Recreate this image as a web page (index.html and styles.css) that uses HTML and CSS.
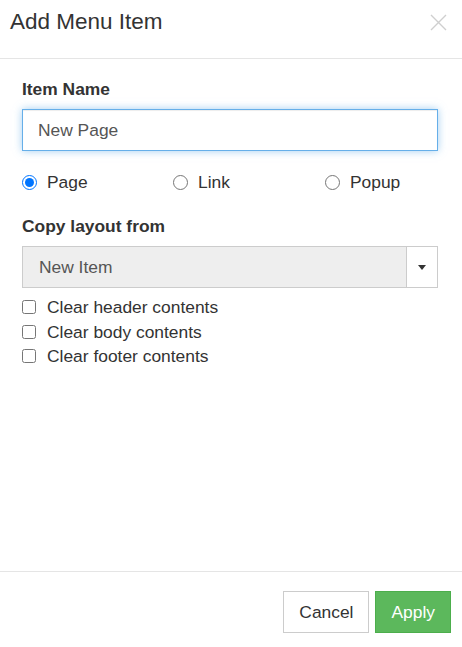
FILE: index.html
```html
<!DOCTYPE html>
<html lang="en">
<head>
<meta charset="utf-8">
<title>Add Menu Item</title>
<link rel="stylesheet" href="styles.css">
</head>
<body>
<div class="modal">
  <div class="modal-header">
    <h4 class="modal-title">Add Menu Item</h4>
    <svg class="close" width="17" height="17" viewBox="0 0 17 17" aria-label="Close">
      <path d="M1 1 L16 16 M16 1 L1 16" stroke="#cfcfcf" stroke-width="1.4" fill="none"/>
    </svg>
  </div>
  <div class="modal-body">
    <label class="field-label">Item Name</label>
    <input class="text-input" type="text" value="New Page">
    <div class="radio-row">
      <label class="radio"><input type="radio" name="kind" checked><span>Page</span></label>
      <label class="radio"><input type="radio" name="kind"><span>Link</span></label>
      <label class="radio"><input type="radio" name="kind"><span>Popup</span></label>
    </div>
    <label class="field-label label-copy">Copy layout from</label>
    <div class="select">
      <div class="select-value">New Item</div>
      <div class="select-btn"><span class="caret"></span></div>
    </div>
    <div class="checks">
      <label class="check"><input type="checkbox"><span>Clear header contents</span></label>
      <label class="check"><input type="checkbox"><span>Clear body contents</span></label>
      <label class="check"><input type="checkbox"><span>Clear footer contents</span></label>
    </div>
  </div>
  <div class="modal-footer">
    <button class="btn btn-default">Cancel</button>
    <button class="btn btn-success">Apply</button>
  </div>
</div>
</body>
</html>
```

FILE: styles.css
```css
* { box-sizing: border-box; }
html, body { margin: 0; padding: 0; background: #fff; }
body {
  font-family: "Liberation Sans", Arial, sans-serif;
  font-size: 17.4px;
  line-height: 24.3px;
  color: #333;
}
.modal {
  display: flex;
  flex-direction: column;
  height: 647px;
}
.modal-header {
  height: 59px;
  padding: 10px 15px 0 10px;
  border-bottom: 1px solid #e5e5e5;
  display: flex;
  justify-content: space-between;
  align-items: flex-start;
}
.modal-title {
  margin: 0;
  font-size: 22.5px;
  font-weight: normal;
  line-height: 24.2px;
  color: #333;
}
.close { margin-top: 4px; display: block; }
.modal-body {
  flex: 1;
  padding: 18px 24px 0 22px;
}
.field-label {
  display: block;
  font-weight: bold;
  line-height: 24px;
  margin-bottom: 8px;
}
.text-input {
  display: block;
  width: 100%;
  height: 42px;
  margin: 0;
  padding: 0 15px;
  font-family: inherit;
  font-size: 17.4px;
  color: #555;
  background: #fff;
  border: 1px solid #66afe9;
  border-radius: 0;
  outline: none;
  box-shadow: inset 0 1px 1px rgba(0,0,0,.075), 0 0 8px rgba(102,175,233,.6);
}
.radio-row {
  display: grid;
  grid-template-columns: 151px 152px 1fr;
  margin-top: 19px;
  height: 24px;
}
.radio, .check {
  display: flex;
  align-items: center;
  line-height: 24px;
}
.radio input {
  width: 15px;
  height: 15px;
  margin: 0 10px 0 0;
}
.label-copy { margin-top: 20px; }
.select {
  display: flex;
  height: 42px;
  border: 1px solid #ccc;
}
.select-value {
  flex: 1;
  background: #eee;
  color: #555;
  padding-left: 16px;
  display: flex;
  align-items: center;
}
.select-btn {
  width: 31px;
  border-left: 1px solid #ccc;
  background: #fff;
  display: flex;
  align-items: center;
  justify-content: center;
}
.caret {
  width: 0;
  height: 0;
  border-top: 5px solid #333;
  border-left: 4.5px solid transparent;
  border-right: 4.5px solid transparent;
}
.checks { margin-top: 7px; }
.check { height: 24.5px; }
.check input {
  width: 14px;
  height: 14px;
  margin: 0 11px 0 0;
}
.modal-footer {
  border-top: 1px solid #e5e5e5;
  padding: 19px 11px 14px 0;
  display: flex;
  justify-content: flex-end;
  gap: 6px;
}
.btn {
  height: 42px;
  padding: 0 15px;
  font-family: inherit;
  font-size: 17.4px;
  border: 1px solid #ccc;
  border-radius: 0;
  background: #fff;
  color: #333;
  cursor: pointer;
}
.btn-success {
  background: #5cb85c;
  border-color: #4cae4c;
  color: #fff;
}
```
